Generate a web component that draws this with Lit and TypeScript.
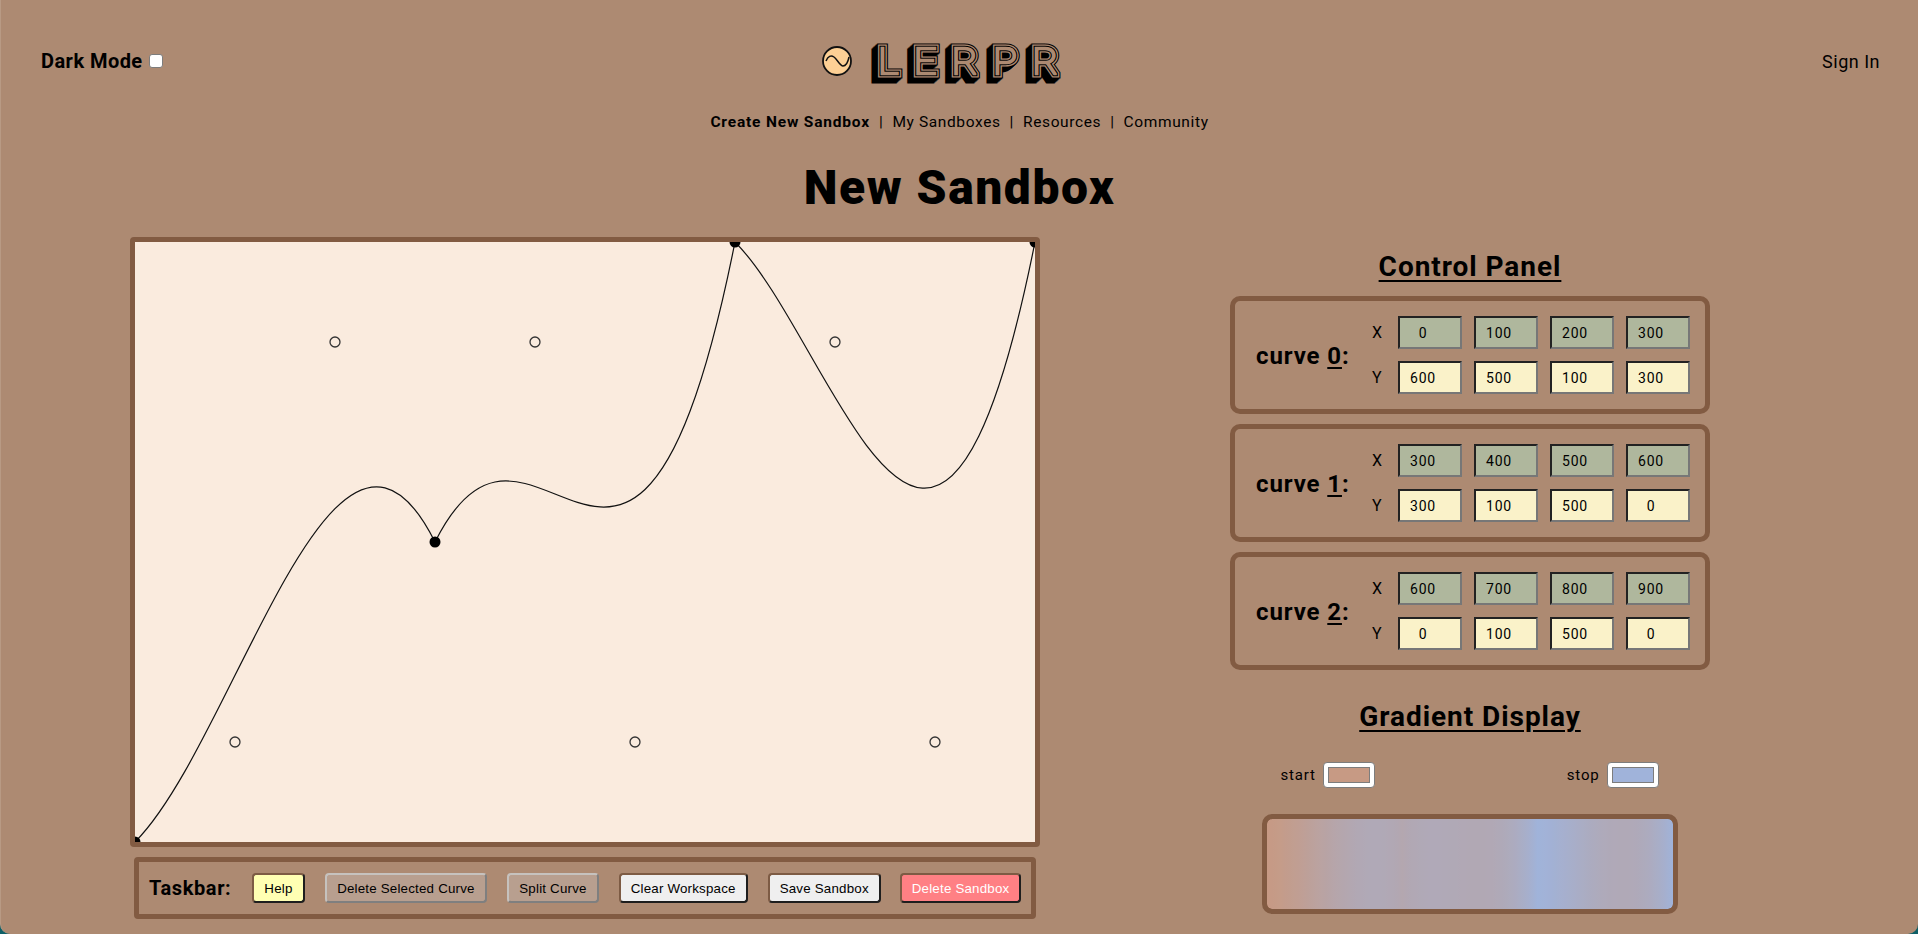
import { LitElement, html, css, svg } from "lit";
import { customElement } from "lit/decorators.js";

type P = [number, number];
const curves: { x: number[]; y: number[] }[] = [
  { x: [0, 100, 200, 300], y: [600, 500, 100, 300] },
  { x: [300, 400, 500, 600], y: [300, 100, 500, 0] },
  { x: [600, 700, 800, 900], y: [0, 100, 500, 0] },
];
const START: number[] = [199, 154, 132];
const STOP: number[] = [160, 179, 218];

function bez(v: number[], t: number) {
  const u = 1 - t;
  return u * u * u * v[0] + 3 * u * u * t * v[1] + 3 * u * t * t * v[2] + t * t * t * v[3];
}

function gradient() {
  const stops: string[] = [];
  const n = 30;
  for (let c = 0; c < 3; c++) {
    for (let i = 0; i < n; i++) {
      const t = i / n;
      const y = bez(curves[c].y, t);
      const f = 1 - y / 600;
      const col = START.map((s, k) => Math.round(s + (STOP[k] - s) * f));
      const pos = ((c + t) / 3) * 100;
      stops.push(`rgb(${col.join(",")}) ${pos.toFixed(2)}%`);
    }
  }
  stops.push(`rgb(${STOP.join(",")}) 100%`);
  return `linear-gradient(to right, ${stops.join(",")})`;
}

@customElement("app-root")
export class AppRoot extends LitElement {
  static styles = css`
    :host {
      display: block;
      height: 934px;
      background: #0d5f66;
      font-family: "Roboto", "Liberation Sans", sans-serif;
      color: #000;
    }
    .page {
      box-sizing: border-box;
      height: 934px;
      overflow: hidden;
      background: #ad8a72;
      border-radius: 0 0 10px 10px;
      border-left: 1px solid #b89a84;
      display: flex;
      flex-direction: column;
    }
    .header {
      height: 96px;
      padding: 26px 38px 0 40px;
      box-sizing: border-box;
      display: grid;
      grid-template-columns: 1fr auto 1fr;
      align-items: center;
    }
    .dark {
      display: flex;
      align-items: center;
      gap: 6px;
      font-weight: 700;
      font-size: 20px;
      letter-spacing: 0.45px;
    }
    .check {
      width: 12px;
      height: 12px;
      background: #fff;
      border: 1px solid #7d7d7d;
      border-radius: 3px;
    }
    .signin {
      justify-self: end;
      font-size: 18px;
      font-weight: 400;
      letter-spacing: 0.5px;
    }
    .brand {
      display: flex;
      align-items: center;
      gap: 16px;
      margin-right: 38px;
    }
    .logo {
      position: relative;
      font-family: "Roboto", sans-serif;
      font-weight: 100;
      font-size: 36px;
      line-height: 40px;
      letter-spacing: 14px;
      width: 193px;
      height: 40px;
      white-space: nowrap;
      transform: scaleX(1.1);
      transform-origin: left center;
      color: #000;
      box-sizing: border-box;
    }
    .logo span { position: absolute; left: 9px; top: 1px; }
    .logo span::before { content: "LERPR"; }
    .ex { -webkit-text-stroke: 9px #000; color: #000; }
    .l1 { -webkit-text-stroke: 7px #ad8a72; color: #ad8a72; }
    .l2 { -webkit-text-stroke: 4.5px #000; color: #000; }
    .l3 { -webkit-text-stroke: 2.5px #ad8a72; color: #ad8a72; }
    .nav {
      display: flex;
      justify-content: center;
      align-items: center;
      gap: 9px;
      font-size: 15.5px;
      font-weight: 400;
      letter-spacing: 0.62px;
      height: 20px;
      margin-top: 16px;
    }
    .nav b { font-weight: 700; letter-spacing: 0.82px; }
    h1 {
      margin: 28px 0 0;
      text-align: center;
      font-size: 48px;
      line-height: 56px;
      font-weight: 900;
      letter-spacing: 1.55px;
    }
    .main {
      display: flex;
      margin-top: 21px;
      padding-left: 129px;
    }
    .left {
      width: 910px;
      display: flex;
      flex-direction: column;
      align-items: center;
    }
    .canvas {
      width: 900px;
      height: 600px;
      border: 5px solid #825b42;
      border-radius: 4px;
      background: #faebde;
      overflow: hidden;
    }
    .canvas svg { display: block; }
    .taskbar {
      box-sizing: border-box;
      margin-top: 10px;
      width: 902px;
      height: 62px;
      border: 5px solid #825b42;
      border-radius: 4px;
      display: flex;
      align-items: center;
      gap: 20px;
      padding: 0 10px;
    }
    .tasklabel {
      font-weight: 700;
      font-size: 20px;
      letter-spacing: 0.6px;
      margin-right: 1px;
      flex: none;
    }
    button {
      box-sizing: border-box;
      flex: none;
      height: 30px;
      padding: 0 10px;
      white-space: nowrap;
      border-width: 2px;
      border-style: solid;
      border-radius: 4px;
      border-color: #7d5b44 #1e1e1e #1e1e1e #7d5b44;
      background: #efefef;
      color: #000;
      font-family: "Liberation Sans", sans-serif;
      font-size: 13.33px;
      letter-spacing: 0.2px;
    }
    .help { background: #ffffb3; }
    .dis {
      background: #b89f8f;
      border-color: #c6c2be #7f7f7f #7f7f7f #c6c2be;
    }
    .wide { padding: 0 10.6px; }
    .danger { background: #ff8084; color: #fff; margin-left: -1px; }
    .right {
      margin-left: 190px;
      width: 480px;
      display: flex;
      flex-direction: column;
      align-items: center;
    }
    h2 {
      margin: 0;
      font-size: 28px;
      line-height: 34px;
      font-weight: 700;
      text-decoration: underline;
      text-underline-offset: 4px;
      letter-spacing: 0.95px;
    }
    .cp { margin-top: 13px; }
    .boxes {
      margin-top: 12px;
      display: flex;
      flex-direction: column;
      gap: 10px;
      width: 100%;
    }
    .curve {
      box-sizing: border-box;
      height: 118px;
      border: 5px solid #825b42;
      border-radius: 10px;
      display: flex;
      align-items: center;
      padding-left: 21px;
    }
    .cname {
      width: 116px;
      font-weight: 700;
      font-size: 24px;
      letter-spacing: 0.9px;
      padding-top: 2px;
    }
    .cname u { text-underline-offset: 3px; }
    .grid {
      display: grid;
      grid-template-columns: 14px repeat(4, 64px);
      column-gap: 12px;
      row-gap: 12px;
      align-items: center;
    }
    .axis { font-size: 16px; font-weight: 400; }
    input {
      box-sizing: border-box;
      width: 64px;
      height: 33px;
      border-width: 2px;
      border-style: solid;
      border-color: #222 #777 #777 #222;
      padding: 0 14px 0 0;
      text-align: center;
      font-family: "Roboto", sans-serif;
      font-size: 14px;
      letter-spacing: 0.8px;
      color: #000;
      outline: none;
    }
    .gx { background: #afb79d; }
    .gy { background: #faf2c9; }
    .gd { margin-top: 30px; }
    .swatches {
      margin-top: 28px;
      width: 378px;
      margin-left: -1px;
      display: flex;
      justify-content: space-between;
    }
    .sw { display: flex; align-items: center; gap: 7px; font-size: 15px; font-weight: 400; letter-spacing: 0.8px; }
    .chip {
      box-sizing: border-box;
      width: 52px;
      height: 26px;
      border: 1px solid #7d7d7d;
      border-radius: 4px;
      background: #fff;
      padding: 4px;
      display: flex;
    }
    .chip i { flex: 1; border: 1px solid #7d7d7d; }
    .c1 { background: #c79a84; }
    .c2 { background: #a0b3da; }
    .grad {
      box-sizing: border-box;
      margin-top: 26px;
      width: 416px;
      height: 100px;
      border: 5px solid #825b42;
      border-radius: 10px;
    }
  `;

  render() {
    const anchors: P[] = [[0, 600], [300, 300], [600, 0], [900, 0]];
    const ctrls: P[] = [[100, 500], [200, 100], [400, 100], [500, 500], [700, 100], [800, 500]];
    const d = curves
      .map((c) => `M${c.x[0]} ${c.y[0]}C${c.x[1]} ${c.y[1]} ${c.x[2]} ${c.y[2]} ${c.x[3]} ${c.y[3]}`)
      .join("");
    return html`
      <div class="page">
        <div class="header">
          <div class="dark">Dark Mode <span class="check"></span></div>
          <div class="brand">
            <svg width="30" height="30" viewBox="0 0 30 30">
              <circle cx="15" cy="15" r="14" fill="#fdd095" stroke="#111" stroke-width="1.8"></circle>
              <path d="M4 15C6 10 9 9 12 11S18 20 21 20S26 16 27 11" fill="none" stroke="#111" stroke-width="1.5"></path>
            </svg>
            <div class="logo" role="img" aria-label="LERPR">
              ${[5, 4, 3, 2, 1, 0].map(
                (o) => html`<span class="ex" style="transform:translate(${-o}px,${o}px)"></span>`
              )}
              <span class="l1"></span><span class="l2"></span><span class="l3"></span>
            </div>
          </div>
          <div class="signin">Sign In</div>
        </div>
        <div class="nav">
          <b>Create New Sandbox</b><span>|</span><span>My Sandboxes</span><span>|</span><span>Resources</span><span>|</span><span>Community</span>
        </div>
        <h1>New Sandbox</h1>
        <div class="main">
          <div class="left">
            <div class="canvas">
              <svg width="900" height="600" viewBox="0 0 900 600">
                <path d=${d} fill="none" stroke="#111" stroke-width="1.2"></path>
                ${anchors.map((p) => svg`<circle cx=${p[0]} cy=${p[1]} r="5.5" fill="#000"></circle>`)}
                ${ctrls.map((p) => svg`<circle cx=${p[0]} cy=${p[1]} r="5" fill="none" stroke="#333" stroke-width="1.3"></circle>`)}
              </svg>
            </div>
            <div class="taskbar">
              <span class="tasklabel">Taskbar:</span>
              <button class="help">Help</button>
              <button class="dis wide">Delete Selected Curve</button>
              <button class="dis">Split Curve</button>
              <button>Clear Workspace</button>
              <button>Save Sandbox</button>
              <button class="danger">Delete Sandbox</button>
            </div>
          </div>
          <div class="right">
            <h2 class="cp">Control Panel</h2>
            <div class="boxes">
              ${curves.map(
                (c, i) => html`
                  <div class="curve">
                    <div class="cname">curve <u>${i}</u>:</div>
                    <div class="grid">
                      <span class="axis">X</span>
                      ${c.x.map((v) => html`<input class="gx" .value=${String(v)} />`)}
                      <span class="axis">Y</span>
                      ${c.y.map((v) => html`<input class="gy" .value=${String(v)} />`)}
                    </div>
                  </div>
                `
              )}
            </div>
            <h2 class="gd">Gradient Display</h2>
            <div class="swatches">
              <div class="sw">start <span class="chip"><i class="c1"></i></span></div>
              <div class="sw">stop <span class="chip"><i class="c2"></i></span></div>
            </div>
            <div class="grad" style="background:${gradient()} padding-box, #825b42"></div>
          </div>
        </div>
      </div>
    `;
  }
}
